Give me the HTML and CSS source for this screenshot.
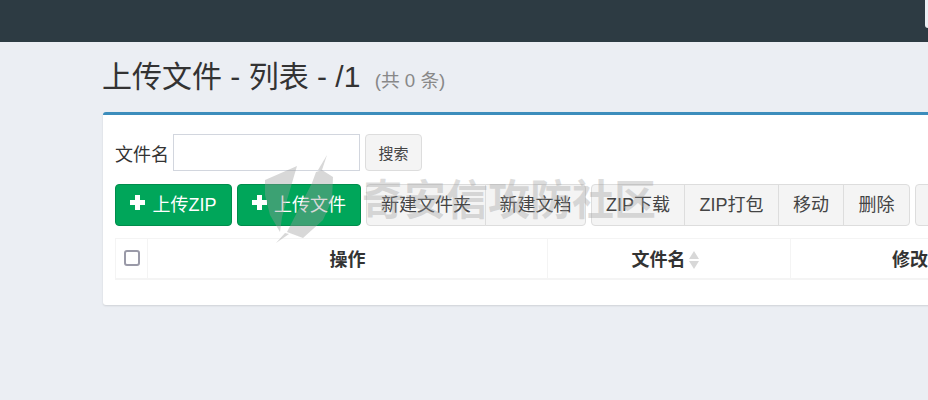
FILE: index.html
```html
<!DOCTYPE html>
<html lang="zh-CN">

<head>
    <meta charset="UTF-8" />
    <title>上传文件 - 列表</title>
    <link rel="stylesheet" href="styles.css">
</head>

<body>
    <header class="navbar">
        <div class="navbar-corner"></div>
    </header>

    <main class="content">
        <h1 class="page-title">上传文件 - 列表 - /1 <small>(共 0 条)</small></h1>

        <section class="box">
            <form class="search-form">
                <label class="search-label" for="name">文件名</label>
                <input class="search-input" id="name" type="text" />
                <button class="btn btn-search" type="button">搜索</button>
            </form>

            <div class="toolbar">
                <button class="btn btn-green" type="button">
                    <svg class="icon-plus" viewBox="0 0 15 15"><path d="M5 0h5v5h5v5h-5v5H5v-5H0V5h5z" /></svg>
                    上传ZIP
                </button>
                <button class="btn btn-green btn-file" type="button">
                    <svg class="icon-plus" viewBox="0 0 15 15"><path d="M5 0h5v5h5v5h-5v5H5v-5H0V5h5z" /></svg>
                    上传文件
                </button>
                <div class="btn-group">
                    <button class="btn w-119" type="button">新建文件夹</button>
                    <button class="btn w-101" type="button">新建文档</button>
                </div>
                <div class="btn-group">
                    <button class="btn w-93" type="button">ZIP下载</button>
                    <button class="btn w-94" type="button">ZIP打包</button>
                    <button class="btn w-65" type="button">移动</button>
                    <button class="btn w-67" type="button">删除</button>
                </div>
                <button class="btn w-93" type="button"></button>
            </div>

            <table class="file-table">
                <thead>
                    <tr>
                        <th class="col-check"><span class="checkbox"></span></th>
                        <th class="col-action">操作</th>
                        <th class="col-name">
                            文件名<svg class="icon-sort" viewBox="0 0 10 18"><path d="M5 0l5 8H0zM5 18l5-8H0z" /></svg>
                        </th>
                        <th class="col-time">修改时间</th>
                    </tr>
                </thead>
            </table>
        </section>
    </main>

    <!-- 水印 -->
    <div class="watermark">
        <svg class="watermark-logo" viewBox="0 0 80 90">
            <path d="M0 25L32 11 17 62 15 77 5 60 0 40z" />
            <path d="M57 15L68 22 67 45 58 65 38 83 22 77 47 28 51 17z" />
            <path d="M62 0L53 15 57 15zM20 78L11 88 24 79z" />
        </svg>
        <span class="watermark-text">奇安信攻防社区</span>
    </div>
</body>

</html>
```

FILE: styles.css
```css
* {
    box-sizing: border-box;
}

body {
    margin: 0;
    height: 400px;
    overflow: hidden;
    position: relative;
    background: #ebeef3;
    color: #333;
    font-family: "Liberation Sans", "Noto Sans CJK SC", sans-serif;
}

.navbar {
    height: 42px;
    background: #2d3b43;
    display: flex;
    justify-content: flex-end;
}

.navbar-corner {
    width: 3px;
    height: 28px;
    background: #ebeef3;
    border-bottom-left-radius: 3px;
}

.content {
    width: 1300px;
    padding-left: 103px;
}

.page-title {
    margin: 0 0 0 -1px;
    height: 70px;
    padding-top: 15px;
    font-size: 30px;
    line-height: 40px;
    font-weight: 400;
}

.page-title small {
    margin-left: 6px;
    font-size: 18.7px;
    color: #888;
}

.box {
    height: 193px;
    padding: 19px 12px 0;
    background: #fff;
    border-top: 3px solid #3c8dbc;
    border-radius: 3px;
    box-shadow: 0 1px 2px rgba(0, 0, 0, 0.12);
}

.search-form {
    display: flex;
    align-items: center;
    height: 37px;
}

.search-label {
    width: 58px;
    font-size: 18px;
}

.search-input {
    width: 187px;
    height: 37px;
    border: 1px solid #d2d6de;
    background: #fff;
}

.btn {
    height: 42px;
    padding: 0 0 4px;
    border: 1px solid #ddd;
    border-radius: 4px;
    background: #f4f4f4;
    color: #444;
    font-family: inherit;
    font-size: 18px;
}

.btn-search {
    width: 57px;
    height: 37px;
    margin-left: 5px;
    padding-bottom: 1px;
    font-size: 15px;
}

.toolbar {
    display: flex;
    gap: 5px;
    margin-top: 13px;
}

.btn-green {
    width: 117px;
    display: flex;
    align-items: center;
    justify-content: center;
    gap: 7px;
    background: #00a65a;
    border-color: #008d4c;
    color: #fff;
}

.btn-file {
    width: 124px;
}

.icon-plus {
    flex: none;
    width: 15px;
    height: 15px;
    margin-top: -2px;
    fill: #fff;
}

.btn-group {
    display: flex;
}

.btn-group .btn {
    border-radius: 0;
    margin-left: -1px;
}

.btn-group .btn:first-child {
    margin-left: 0;
    border-radius: 4px 0 0 4px;
}

.btn-group .btn:last-child {
    border-radius: 0 4px 4px 0;
}

.w-119 {
    width: 120px;
}

.w-101 {
    width: 101px;
}

.w-93 {
    width: 94px;
}

.w-94 {
    width: 95px;
}

.w-65 {
    width: 66px;
}

.w-67 {
    width: 67px;
}

.file-table {
    width: 1100px;
    margin-top: 12px;
    border-collapse: collapse;
    table-layout: fixed;
    border: 1px solid #f4f4f4;
    border-bottom-width: 2px;
}

.file-table th {
    height: 40px;
    padding: 0;
    border-left: 1px solid #f4f4f4;
    font-size: 18px;
    text-align: center;
}

.col-check {
    width: 32px;
}

.col-action {
    width: 400px;
}

.col-name {
    width: 243px;
}

.file-table th.col-name {
    padding-right: 8px;
}

.file-table th.col-time {
    text-align: left;
    padding-left: 101px;
}

.checkbox {
    display: block;
    width: 16px;
    height: 16px;
    margin: 0 auto;
    border: 2px solid #9a9aa8;
    border-radius: 3px;
}

.icon-sort {
    width: 10px;
    height: 18px;
    margin-left: 3px;
    vertical-align: -3px;
    fill: #d8d8d8;
}

.watermark {
    position: absolute;
    left: 265px;
    top: 155px;
    display: flex;
    pointer-events: none;
}

.watermark-logo {
    width: 80px;
    height: 90px;
    fill: rgba(154, 154, 154, 0.39);
}

.watermark-text {
    margin: 21px 0 0 17px;
    font-size: 42px;
    line-height: 50px;
    font-weight: 700;
    white-space: nowrap;
    color: rgba(154, 154, 154, 0.34);
}
```
